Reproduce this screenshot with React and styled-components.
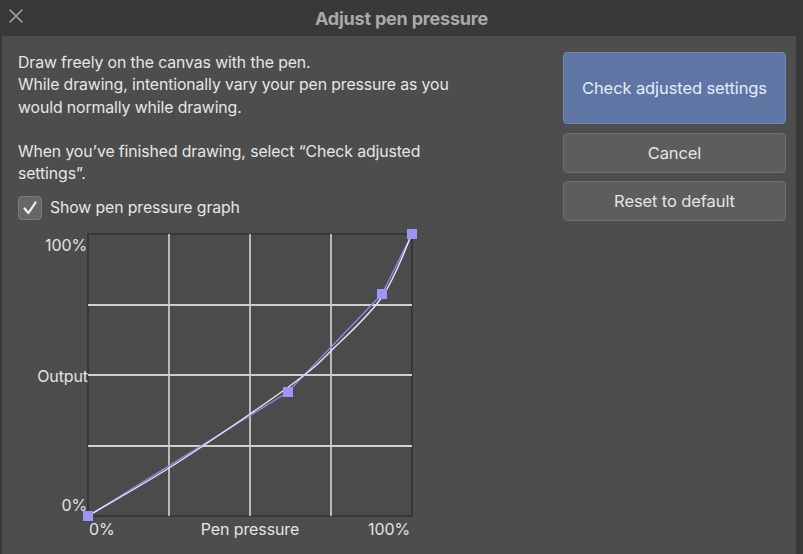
import React from "react";
import styled, { createGlobalStyle } from "styled-components";

const GlobalStyle = createGlobalStyle`
  html, body {
    margin: 0;
    padding: 0;
    background: #393939;
  }
  body {
    font-family: Inter, "Liberation Sans", Arial, sans-serif;
  }
`;

const Window = styled.div`
  width: 803px;
  height: 554px;
  display: flex;
  flex-direction: column;
  background: #393939;
  overflow: hidden;
`;

const TitleBar = styled.div`
  height: 36px;
  flex: none;
  display: flex;
  align-items: center;
  justify-content: center;
  position: relative;
`;

const Title = styled.div`
  color: #a9a9a9;
  font-size: 18px;
  font-weight: 700;
  letter-spacing: -0.2px;
`;

const CloseButton = styled.button`
  position: absolute;
  left: 7px;
  top: 7px;
  width: 18px;
  height: 18px;
  padding: 0;
  border: none;
  background: none;
  display: flex;
  align-items: center;
  justify-content: center;
`;

const Body = styled.div`
  flex: 1;
  margin-left: 2px;
  margin-right: 7px;
  background: #4d4d4d;
  display: flex;
  justify-content: space-between;
  padding: 16px 10px 0 16px;
`;

const LeftColumn = styled.div`
  display: flex;
  flex-direction: column;
  color: #e6e6e6;
  font-size: 15.8px;
  letter-spacing: -0.1px;
  line-height: 22.3px;
`;

const Paragraph = styled.p`
  margin: 0 0 ${({ $gap }) => $gap || 0}px;
`;

const CheckRow = styled.label`
  display: flex;
  align-items: center;
  gap: 8px;
  margin-top: 11px;
  height: 24px;
`;

const CheckBox = styled.span`
  width: 24px;
  height: 24px;
  box-sizing: border-box;
  border-radius: 4px;
  background: #676767;
  border: 1px solid #7b7b7b;
  display: flex;
  align-items: center;
  justify-content: center;
`;

const Chart = styled.svg`
  display: block;
  margin-top: 8px;
  font-family: Inter, "Liberation Sans", Arial, sans-serif;
`;

const RightColumn = styled.div`
  width: 223px;
  display: flex;
  flex-direction: column;
  gap: 8px;
`;

const Button = styled.button`
  height: ${({ $tall }) => ($tall ? 72 : 40)}px;
  margin-bottom: ${({ $tall }) => ($tall ? 1 : 0)}px;
  border-radius: 4px;
  border: 1px solid ${({ $primary }) => ($primary ? "#7189b6" : "#6e6e6e")};
  background: ${({ $primary }) => ($primary ? "#5f76a4" : "#5d5d5d")};
  color: ${({ $primary }) => ($primary ? "#e4ecfb" : "#e4e4e4")};
  font-family: Inter, "Liberation Sans", Arial, sans-serif;
  font-size: 16.5px;
  letter-spacing: -0.1px;
  padding: 0;
`;

// chart geometry in page coordinates
const X0 = 88, X1 = 412, Y0 = 516, Y1 = 234;
const handles = [
  [88, 516],
  [288, 392],
  [382, 294],
  [412, 234],
];
const curvePts = [
  [88, 516],
  [169, 468],
  [250, 414],
  [303, 376],
  [331, 351],
  [382, 297],
  [412, 234],
];

const smoothPath = (pts) => {
  let d = `M${pts[0][0]},${pts[0][1]}`;
  for (let i = 0; i < pts.length - 1; i++) {
    const p0 = pts[i - 1] || pts[i];
    const p1 = pts[i];
    const p2 = pts[i + 1];
    const p3 = pts[i + 2] || p2;
    const c1 = [p1[0] + (p2[0] - p0[0]) / 6, p1[1] + (p2[1] - p0[1]) / 6];
    const c2 = [p2[0] - (p3[0] - p1[0]) / 6, p2[1] - (p3[1] - p1[1]) / 6];
    d += ` C${c1[0]},${c1[1]} ${c2[0]},${c2[1]} ${p2[0]},${p2[1]}`;
  }
  return d;
};

const PressureGraph = () => {
  const vLines = [169, 250, 331];
  const hLines = [305, 375, 446];
  return (
    <Chart width="402" height="312" viewBox="18 228 402 312">
      <rect x={X0} y={Y1} width={X1 - X0} height={Y0 - Y1} fill="#4b4b4b" stroke="#303030" strokeWidth="1.5" />
      {vLines.map((x) => (
        <line key={x} x1={x} y1={Y1} x2={x} y2={Y0} stroke="#d6d6d6" strokeWidth="1.6" />
      ))}
      {hLines.map((y) => (
        <line key={y} x1={X0} y1={y} x2={X1} y2={y} stroke="#cfcfcf" strokeWidth="1.8" />
      ))}
      <polyline
        points={handles.map((p) => p.join(",")).join(" ")}
        fill="none"
        stroke="#8d86e6"
        strokeWidth="1.4"
      />
      <path d={smoothPath(curvePts)} fill="none" stroke="#e6e3f7" strokeWidth="1.4" />
      {handles.map(([x, y]) => (
        <rect key={x} x={x - 5} y={y - 5} width="10" height="10" fill="#9b95f6" />
      ))}
      <g fill="#e3e3e3" fontSize="16">
        <text x="87" y="251" textAnchor="end">100%</text>
        <text x="88" y="382" textAnchor="end">Output</text>
        <text x="87" y="511" textAnchor="end">0%</text>
        <text x="89" y="535">0%</text>
        <text x="250" y="535" textAnchor="middle">Pen pressure</text>
        <text x="410" y="535" textAnchor="end">100%</text>
      </g>
    </Chart>
  );
};

export default function App() {
  return (
    <>
      <GlobalStyle />
      <Window>
        <TitleBar>
          <CloseButton aria-label="Close">
            <svg width="16" height="16" viewBox="0 0 16 16">
              <path d="M2 2 L14 14 M14 2 L2 14" stroke="#a8a8a8" strokeWidth="1.5" strokeLinecap="round" />
            </svg>
          </CloseButton>
          <Title>Adjust pen pressure</Title>
        </TitleBar>
        <Body>
          <LeftColumn>
            <Paragraph $gap={22}>
              Draw freely on the canvas with the pen.
              <br />
              While drawing, intentionally vary your pen pressure as you
              <br />
              would normally while drawing.
            </Paragraph>
            <Paragraph>
              When you’ve finished drawing, select “Check adjusted
              <br />
              settings”.
            </Paragraph>
            <CheckRow>
              <CheckBox>
                <svg width="18" height="18" viewBox="0 0 18 18">
                  <path d="M3.5 9.5 L7.5 14 L14.5 3.5" fill="none" stroke="#f4f4f4" strokeWidth="2.2" strokeLinecap="round" strokeLinejoin="round" />
                </svg>
              </CheckBox>
              Show pen pressure graph
            </CheckRow>
            <PressureGraph />
          </LeftColumn>
          <RightColumn>
            <Button $primary $tall>Check adjusted settings</Button>
            <Button>Cancel</Button>
            <Button>Reset to default</Button>
          </RightColumn>
        </Body>
      </Window>
    </>
  );
}
